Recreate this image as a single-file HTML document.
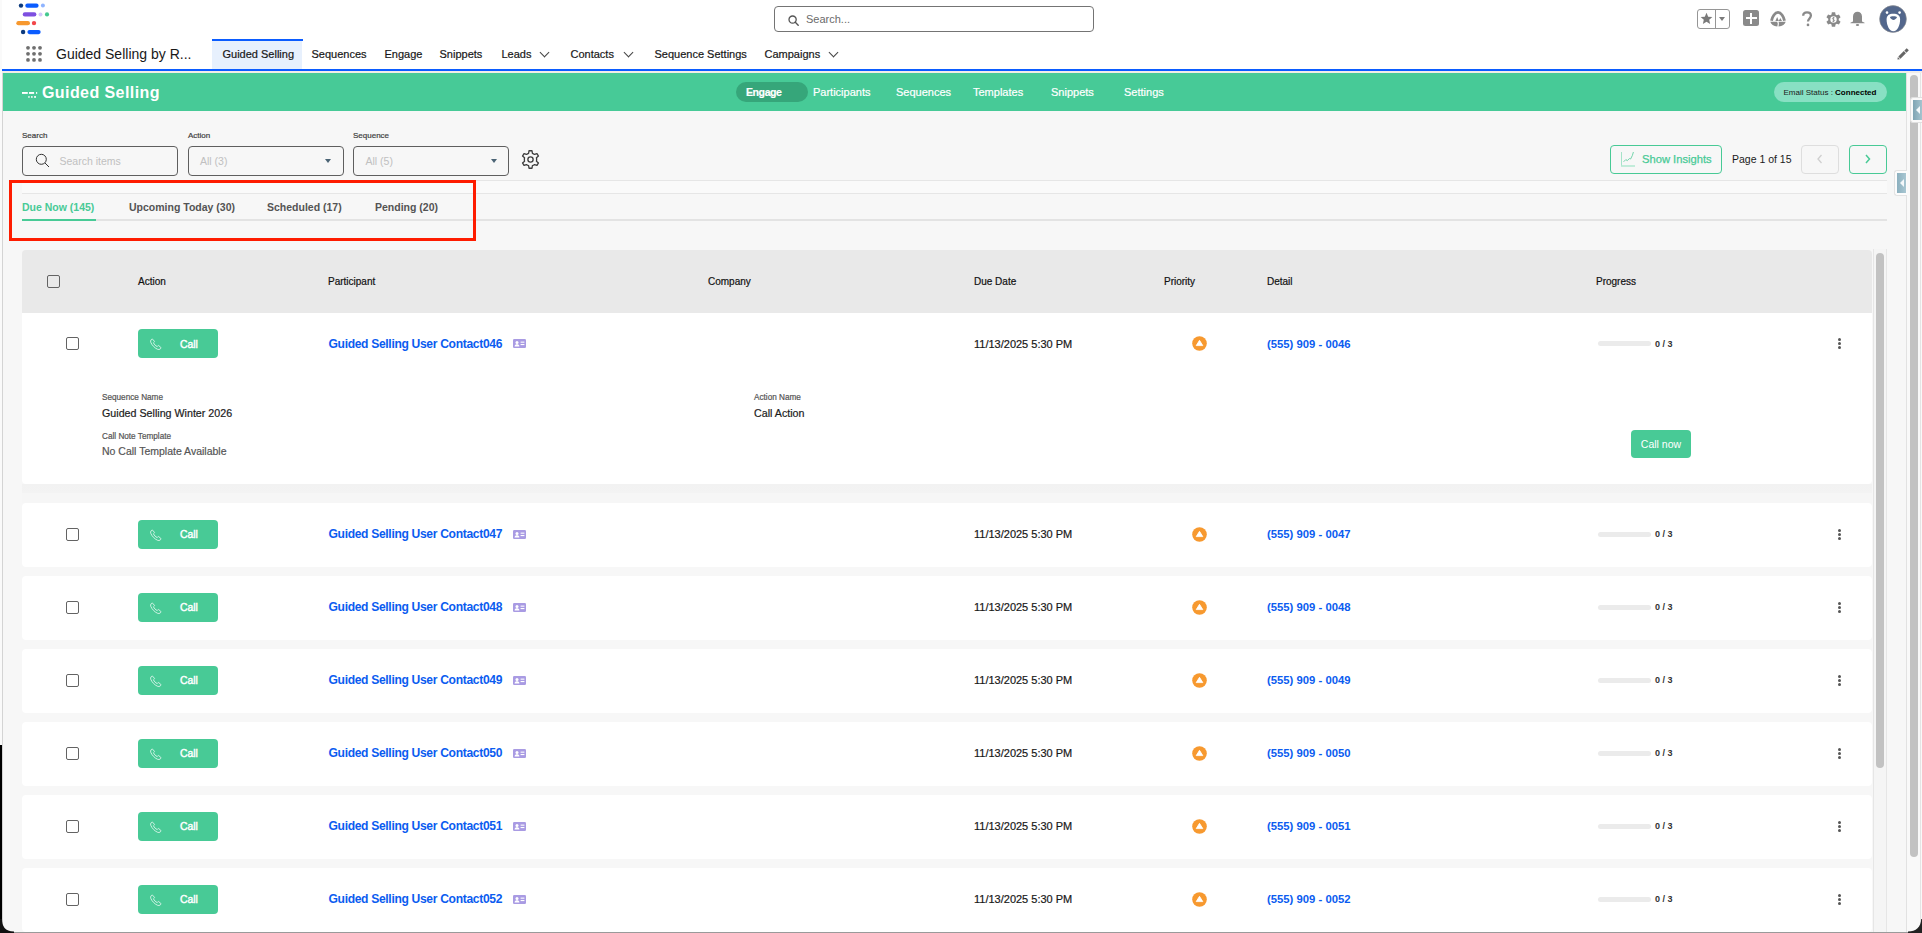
<!DOCTYPE html>
<html><head><meta charset="utf-8">
<style>
*{box-sizing:border-box;margin:0;padding:0}
html,body{width:1922px;height:933px;overflow:hidden;background:#fff;font-family:"Liberation Sans", sans-serif;position:relative}
.nav,.gtab,.th,.date,.val,.val2,.lbl,.flbl{-webkit-text-stroke:0.2px currentColor}
.a{position:absolute}
.t{position:absolute;white-space:nowrap;line-height:14px}
.nav{position:absolute;top:47px;font-size:11px;color:#181818;line-height:14px;white-space:nowrap}
.chev{position:absolute;top:49px;width:7px;height:7px;border-right:1.2px solid #444;border-bottom:1.2px solid #444;transform:rotate(45deg)}
.gtab{position:absolute;top:85px;font-size:11px;color:#fff;line-height:14px;white-space:nowrap}
.flbl{position:absolute;top:130.6px;font-size:8px;color:#3e3e3e;line-height:10px}
.inp{position:absolute;top:146px;height:30px;border:1px solid #5f5f5f;border-radius:4px;background:#f7f7f7}
.ph{position:absolute;top:8px;font-size:10.5px;color:#c0c0c0;line-height:13px;white-space:nowrap}
.tri{position:absolute;top:12px;width:0;height:0;border-left:3.5px solid transparent;border-right:3.5px solid transparent;border-top:4px solid #4b6475}
.tab{position:absolute;top:200px;font-size:10.5px;font-weight:bold;color:#545454;line-height:14px;white-space:nowrap}
.th{position:absolute;top:275px;font-size:10px;color:#111;line-height:14px;white-space:nowrap}
.cb{position:absolute;width:13px;height:13px;border:1.8px solid #636363;border-radius:2px;background:#fff}
.rowbox{position:absolute;left:22px;width:1850px;background:#fff;border-radius:4px}
.callbtn{position:absolute;width:80px;height:29px;background:#48ca96;border-radius:4px}
.calltxt{position:absolute;left:42px;top:8.5px;font-size:10.4px;font-weight:normal;-webkit-text-stroke:0.4px #fff;color:#fff;line-height:14px}
.link{font-size:12.1px;font-weight:bold;color:#0b5cf0;letter-spacing:-0.33px}
.date{font-size:11px;color:#181818}
.phone{font-size:11.3px;font-weight:bold;color:#0b5cf0}
.pbar{position:absolute;width:53px;height:5px;border-radius:3px;background:#ebebeb}
.prog{font-size:9px;font-weight:bold;color:#333;line-height:12px}
.kd{position:absolute;left:0;width:3.2px;height:3.2px;border-radius:50%;background:#555}
.lbl{font-size:8.2px;color:#555;line-height:10px}
.val{font-size:10.7px;color:#1c1c1c}
.val2{font-size:10.5px;color:#555}
.callnow{position:absolute;width:60px;height:28px;background:#48ca96;border-radius:4px;color:#fff;font-size:10.5px;line-height:28px;text-align:center}
</style></head><body>
<!-- window left border -->
<div class="a" style="left:0;top:0;width:2px;height:745px;background:#fafafa"></div>
<div class="a" style="left:0;top:745px;width:2px;height:188px;background:#000"></div>

<!-- logo -->
<svg class="a" style="left:14px;top:2px" width="40" height="36" viewBox="0 0 40 36">
<circle cx="7" cy="3.6" r="2.2" fill="#0c3a7d"/>
<rect x="11.3" y="1.5" width="13.3" height="4.3" rx="2.15" fill="#0b5cff"/>
<circle cx="28.9" cy="3.6" r="2" fill="#8fb4ff"/>
<rect x="8.7" y="10.3" width="13.7" height="4.3" rx="2.15" fill="#7e4fe0"/>
<circle cx="26.5" cy="12.4" r="2" fill="#d5c8fb"/>
<circle cx="33" cy="12.4" r="2.1" fill="#45c890"/>
<rect x="2.3" y="19" width="13.7" height="4.3" rx="2.15" fill="#f7982e"/>
<circle cx="20" cy="21.1" r="2.2" fill="#f2464a"/>
<circle cx="9.1" cy="30" r="2.2" fill="#0c3a7d"/>
<rect x="13.4" y="27.9" width="13.3" height="4.3" rx="2.15" fill="#0b5cff"/>
</svg>

<!-- top search -->
<div class="a" style="left:774px;top:6px;width:320px;height:26px;border:1px solid #747474;border-radius:4px;background:#fff"></div>
<svg class="a" style="left:788px;top:15px" width="11" height="11" viewBox="0 0 11 11"><circle cx="4.6" cy="4.6" r="3.6" fill="none" stroke="#555" stroke-width="1.3"/><path d="M7.3 7.3 L10.2 10.2" stroke="#555" stroke-width="1.4" stroke-linecap="round"/></svg>
<div class="t" style="left:806px;top:12px;font-size:11px;color:#6b6b6b">Search...</div>

<!-- header right icons -->
<div class="a" style="left:1697px;top:9px;width:33px;height:20px;border:1px solid #969696;border-radius:3px"></div>
<div class="a" style="left:1715px;top:9px;width:1px;height:20px;background:#969696"></div>
<svg class="a" style="left:1700px;top:12px" width="13" height="13" viewBox="0 0 24 24"><path d="M12 1.5 L15.1 8.6 L22.8 9.3 L17 14.4 L18.7 22 L12 18 L5.3 22 L7 14.4 L1.2 9.3 L8.9 8.6 Z" fill="#7a7a7a"/></svg>
<div class="a" style="left:1719px;top:17px;width:0;height:0;border-left:3.5px solid transparent;border-right:3.5px solid transparent;border-top:4px solid #7a7a7a"></div>
<div class="a" style="left:1743px;top:10px;width:16px;height:16px;background:#8a8a8a;border-radius:2.5px"></div>
<div class="a" style="left:1750.2px;top:12.5px;width:1.8px;height:11px;background:#fff"></div>
<div class="a" style="left:1745.6px;top:17.2px;width:11px;height:1.8px;background:#fff"></div>
<svg class="a" style="left:1770px;top:11px" width="16" height="16" viewBox="0 0 16 16"><path d="M1.5 9.8 C2.3 5.5 5 1.4 8 1.4 C11 1.4 13.7 5.5 14.5 9.8" fill="none" stroke="#8a8a8a" stroke-width="2.8"/><path d="M5.4 9.9 L7.2 5.9 L8.8 9.9 Z M8.7 9.9 L10.3 7.1 L12 9.9 Z" fill="#8a8a8a"/><path d="M0.3 10.8 L7.2 10.8 L7.8 12.8 L7.3 15.4 C3.5 15.2 1 13.6 0.3 10.8 Z M8.6 10.8 L15.7 10.8 C15 13.6 12.5 15.2 8.5 15.4 L8.9 12.8 Z" fill="#8a8a8a"/></svg>
<svg class="a" style="left:1801px;top:11px" width="12" height="16" viewBox="0 0 12 16"><path d="M2.2 4.8 C2.2 2.6 3.8 1.3 6 1.3 C8.4 1.3 9.9 2.7 9.9 4.6 C9.9 7.3 7 7.6 7 10.6" fill="none" stroke="#8a8a8a" stroke-width="2.3"/><circle cx="7" cy="13.9" r="1.35" fill="#8a8a8a"/></svg>
<svg class="a" style="left:1825.5px;top:11.5px" width="15" height="15" viewBox="0 0 15 15"><path d="M5.51 2.59 L5.84 0.29 L9.16 0.29 L9.49 2.59 L10.76 3.32 L12.91 2.45 L14.58 5.34 L12.75 6.76 L12.75 8.24 L14.58 9.66 L12.91 12.55 L10.76 11.68 L9.49 12.41 L9.16 14.71 L5.84 14.71 L5.51 12.41 L4.24 11.68 L2.09 12.55 L0.42 9.66 L2.25 8.24 L2.25 6.76 L0.42 5.34 L2.09 2.45 L4.24 3.32 Z" fill="#8a8a8a"/><circle cx="7.5" cy="7.5" r="3.2" fill="#fff"/><path d="M8.6 5.9 C8.2 5.4 6.4 5.4 6.4 6.6 C6.4 7.7 8.6 7.3 8.6 8.5 C8.6 9.6 6.8 9.6 6.3 9.1 M7.5 4.9 L7.5 10.1" fill="none" stroke="#8a8a8a" stroke-width="0.8"/></svg>
<svg class="a" style="left:1850px;top:11px" width="15" height="16" viewBox="0 0 15 16"><path d="M3 10.6 L3 5.6 C3 2.5 5 0.7 7.5 0.7 C10 0.7 12 2.5 12 5.6 L12 10.6 L14.6 11.8 L14.6 12.3 L0.4 12.3 L0.4 11.8 Z" fill="#8a8a8a"/><ellipse cx="7.5" cy="14" rx="1.7" ry="0.9" fill="#8a8a8a"/></svg>
<svg class="a" style="left:1879px;top:5px" width="28" height="28" viewBox="0 0 28 28"><circle cx="14" cy="14" r="13.4" fill="#53678c" stroke="#8e8e8e" stroke-width="0.6"/><circle cx="8" cy="7.6" r="1.3" fill="#fff"/><circle cx="20.6" cy="7.6" r="1.3" fill="#fff"/><path d="M14.3 8.8 C18.5 8.8 21.1 10.5 21.1 14.5 C21.1 20 18.5 26.2 14.3 26.2 C10.1 26.2 7.6 20 7.6 14.5 C7.6 10.5 10.1 8.8 14.3 8.8 Z" fill="#fff"/><path d="M11.1 12.2 C11.1 10.8 17.8 10.8 17.8 12.2 C17.8 13.6 15.5 14.9 14.45 14.9 C13.4 14.9 11.1 13.6 11.1 12.2 Z" fill="#53678c"/></svg>

<!-- nav row -->
<svg class="a" style="left:25px;top:45px" width="18" height="18" viewBox="0 0 18 18"><g fill="#6f6f6f"><circle cx="3" cy="2.8" r="1.9"/><circle cx="9" cy="2.8" r="1.9"/><circle cx="15" cy="2.8" r="1.9"/><circle cx="3" cy="8.8" r="1.9"/><circle cx="9" cy="8.8" r="1.9"/><circle cx="15" cy="8.8" r="1.9"/><circle cx="3" cy="14.9" r="1.9"/><circle cx="9" cy="14.9" r="1.9"/><circle cx="15" cy="14.9" r="1.9"/></g></svg>
<div class="t" style="left:56px;top:46.3px;font-size:14px;color:#181818;line-height:17px">Guided Selling by R...</div>
<div class="a" style="left:212px;top:41px;width:90px;height:28px;background:#e7f0fd"></div>
<div class="a" style="left:212px;top:39px;width:91px;height:2px;background:#0b5cff"></div>
<div class="nav" style="left:222.5px">Guided Selling</div>
<div class="nav" style="left:311.5px">Sequences</div>
<div class="nav" style="left:384.5px">Engage</div>
<div class="nav" style="left:439.5px">Snippets</div>
<div class="nav" style="left:501.5px">Leads</div>
<div class="chev" style="left:541px"></div>
<div class="nav" style="left:570.5px">Contacts</div>
<div class="chev" style="left:625px"></div>
<div class="nav" style="left:654.5px">Sequence Settings</div>
<div class="nav" style="left:764.5px">Campaigns</div>
<div class="chev" style="left:830px"></div>
<svg class="a" style="left:1896px;top:48px" width="13" height="13" viewBox="0 0 13 13"><g transform="translate(6.6,6.4) rotate(-45)" fill="#666"><path d="M-7.3 0 L-5.2 -1.5 L-5.2 1.5 Z"/><rect x="-4.5" y="-1.5" width="7.7" height="3"/><rect x="4" y="-1.5" width="3.3" height="3"/></g></svg>

<!-- blue line -->
<div class="a" style="left:2px;top:69px;width:1920px;height:2px;background:#0b5cff"></div>
<div class="a" style="left:2px;top:71px;width:1920px;height:2px;background:#f1ede8"></div>

<!-- content area -->
<div class="a" style="left:2px;top:73px;width:1905px;height:860px;background:#f7f7f7;border-left:1px solid #d4d4d4"></div>
<!-- green bar -->
<div class="a" style="left:3px;top:73px;width:1903px;height:38px;background:#47ca97"></div>
<svg class="a" style="left:22px;top:91.8px" width="16" height="7" viewBox="0 0 16 7"><g fill="#fff"><rect x="0" y="0" width="5.8" height="1.9"/><rect x="7" y="0" width="5.1" height="1.9"/><rect x="14" y="0.1" width="1.2" height="1.7"/><rect x="6.3" y="4.1" width="1.3" height="1.7"/><rect x="9.1" y="4.1" width="1.5" height="1.7"/><rect x="12.1" y="4.1" width="1.9" height="1.7"/></g></svg>
<div class="t" style="left:42px;top:82.6px;font-size:16px;font-weight:bold;color:#fff;line-height:19px;letter-spacing:0.42px">Guided Selling</div>
<div class="a" style="left:736px;top:82px;width:72px;height:20px;border-radius:10px;background:#36a67a"></div>
<div class="gtab" style="left:746px;font-weight:bold;font-size:10.5px;letter-spacing:-0.4px">Engage</div>
<div class="gtab" style="left:813px">Participants</div>
<div class="gtab" style="left:896px">Sequences</div>
<div class="gtab" style="left:973px">Templates</div>
<div class="gtab" style="left:1051px">Snippets</div>
<div class="gtab" style="left:1124px">Settings</div>
<div class="a" style="left:1774px;top:82px;width:113px;height:20px;border-radius:10px;background:#88e0c3"></div>
<div class="t" style="left:1783.5px;top:87px;font-size:8px;color:#1a1a1a;line-height:11px">Email Status : <b style="color:#000">Connected</b></div>

<!-- right scroll area -->
<div class="a" style="left:1906px;top:73px;width:16px;height:860px;background:#f9f9f9;border-left:1px solid #e2e2e2"></div>
<div class="a" style="left:1910px;top:75px;width:8px;height:782px;border-radius:4px;background:#c2c2c2"></div>


<!-- filters -->
<div class="flbl" style="left:22px">Search</div>
<div class="flbl" style="left:188px">Action</div>
<div class="flbl" style="left:353px">Sequence</div>
<div class="inp" style="left:22px;width:156px"><svg style="position:absolute;left:12px;top:6px" width="15" height="15" viewBox="0 0 15 15"><circle cx="6.3" cy="6.3" r="5" fill="none" stroke="#333" stroke-width="1"/><path d="M10 10 L14 14" stroke="#333" stroke-width="1"/></svg><span class="ph" style="left:36.5px">Search items</span></div>
<div class="inp" style="left:188px;width:156px"><span class="ph" style="left:11px">All (3)</span><div class="tri" style="left:136px"></div></div>
<div class="inp" style="left:353px;width:156px"><span class="ph" style="left:11.5px">All (5)</span><div class="tri" style="left:136.5px"></div></div>
<svg class="a" style="left:520px;top:149px" width="21" height="21" viewBox="0 0 24 24"><path d="M10.3 2 L13.7 2 L14.2 4.9 C15.1 5.2 15.9 5.7 16.6 6.2 L19.4 5.2 L21.1 8.1 L18.8 10 C19 10.7 19 11.3 19 12 C19 12.7 19 13.3 18.8 14 L21.1 15.9 L19.4 18.8 L16.6 17.8 C15.9 18.3 15.1 18.8 14.2 19.1 L13.7 22 L10.3 22 L9.8 19.1 C8.9 18.8 8.1 18.3 7.4 17.8 L4.6 18.8 L2.9 15.9 L5.2 14 C5 13.3 5 12.7 5 12 C5 11.3 5 10.7 5.2 10 L2.9 8.1 L4.6 5.2 L7.4 6.2 C8.1 5.7 8.9 5.2 9.8 4.9 Z" fill="none" stroke="#3d3d3d" stroke-width="1.5" stroke-linejoin="round"/><circle cx="12" cy="12" r="3" fill="none" stroke="#3d3d3d" stroke-width="1.5"/></svg>

<!-- right controls -->
<div class="a" style="left:1610px;top:145px;width:112px;height:29px;border:1px solid #48ca96;border-radius:4px"></div>
<svg class="a" style="left:1620px;top:151px" width="16" height="17" viewBox="0 0 16 17"><path d="M1.5 1 L1.5 15" stroke="#a6e3c9" stroke-width="1"/><path d="M1 15 L15 15" stroke="#b5e9d3" stroke-width="1.6"/><path d="M3.6 10.8 L5.8 8.6 L7.3 9.6 L9.4 7.6 L10.6 8 L12.4 4.4 L13.4 1" fill="none" stroke="#63cfa2" stroke-width="0.9"/></svg>
<div class="t" style="left:1642px;top:152px;font-size:11.2px;color:#48ca96;-webkit-text-stroke:0.25px #48ca96">Show Insights</div>
<div class="t" style="left:1732px;top:152px;font-size:10.5px;color:#1a1a1a">Page 1 of 15</div>
<div class="a" style="left:1801px;top:145px;width:38px;height:29px;border:1px solid #dedede;border-radius:4px"></div>
<svg class="a" style="left:1816px;top:154.2px" width="8" height="10" viewBox="0 0 8 10"><path d="M5.5 1 L2 5 L5.5 9" fill="none" stroke="#cfcfcf" stroke-width="1.3"/></svg>
<div class="a" style="left:1849px;top:145px;width:38px;height:29px;border:1px solid #48ca96;border-radius:4px"></div>
<svg class="a" style="left:1864px;top:154.2px" width="8" height="10" viewBox="0 0 8 10"><path d="M2 1 L5.5 5 L2 9" fill="none" stroke="#48ca96" stroke-width="1.5"/></svg>


<!-- tabs region lines -->
<div class="a" style="left:22px;top:179.5px;width:1865px;height:1px;background:#e6e6e6"></div>
<div class="a" style="left:22px;top:181px;width:1865px;height:12px;background:#fafafa"></div>
<div class="a" style="left:22px;top:193px;width:1865px;height:1px;background:#e6e6e6"></div>
<div class="a" style="left:22px;top:219px;width:1865px;height:2px;background:#e3e3e3"></div>
<div class="a" style="left:22px;top:219px;width:74px;height:2px;background:#48ca96"></div>
<div class="tab" style="left:22px;color:#48ca96">Due Now (145)</div>
<div class="tab" style="left:129px">Upcoming Today (30)</div>
<div class="tab" style="left:267px">Scheduled (17)</div>
<div class="tab" style="left:375px">Pending (20)</div>
<div class="a" style="left:9px;top:180px;width:467px;height:61px;border:3px solid #fe1c00"></div>

<!-- table header -->
<div class="a" style="left:22px;top:250px;width:1850px;height:62.5px;background:#e9e9e9;border-radius:4px 4px 0 0"></div>
<div class="cb" style="left:47px;top:275px;background:transparent"></div>
<div class="th" style="left:138px">Action</div>
<div class="th" style="left:328px">Participant</div>
<div class="th" style="left:708px">Company</div>
<div class="th" style="left:974px">Due Date</div>
<div class="th" style="left:1164px">Priority</div>
<div class="th" style="left:1267px">Detail</div>
<div class="th" style="left:1596px">Progress</div>
<!-- inner scrollbar -->
<div class="a" style="left:1872.5px;top:249px;width:14.5px;height:684px;background:#f5f5f5;border-left:1px solid #e6e6e6;border-right:1px solid #e6e6e6"></div>
<div class="a" style="left:1876px;top:253px;width:8px;height:515px;border-radius:4px;background:#c2c2c2"></div>

<div class="rowbox" style="top:313px;height:171px;border-radius:0 0 4px 4px"></div>
<div class="a" style="left:22px;top:484px;width:1850px;height:19px;background:linear-gradient(#f2f2f2,#f3f3f3 47%,#f6f6f6 50%,#f6f6f6)"></div>
<div class="cb" style="left:66px;top:337.0px"></div>
<div class="callbtn" style="left:138px;top:329.0px"><svg style="position:absolute;left:12px;top:9px" width="12" height="12" viewBox="0 0 12 12"><path d="M2.6 1.2 L4.3 3.2 C4.6 3.6 4.5 4 4.1 4.3 L3.5 4.8 C4.1 6.3 5.6 7.9 7.2 8.5 L7.7 7.9 C8 7.5 8.4 7.4 8.8 7.7 L10.8 9.4 C11.1 9.7 11.1 10.1 10.8 10.4 L10 11.1 C9.4 11.6 8.5 11.7 7.6 11.3 C4.7 10 2 7.3 0.8 4.4 C0.4 3.5 0.5 2.6 1 2 L1.7 1.2 C2 0.9 2.3 0.9 2.6 1.2 Z" fill="none" stroke="#fff" stroke-width="0.8" opacity="0.9"/></svg><span class="calltxt">Call</span></div>
<div class="t link" style="left:328.5px;top:336.8px">Guided Selling User Contact046</div>
<svg style="position:absolute;left:513px;top:339.0px" width="13" height="9" viewBox="0 0 13 9"><rect x="0" y="0" width="13" height="9" rx="1.2" fill="#a99be3"/><circle cx="4" cy="3.4" r="1.5" fill="#fff"/><path d="M1.6 7.4 C1.8 5.6 2.8 5.2 4 5.2 C5.2 5.2 6.2 5.6 6.4 7.4 Z" fill="#fff"/><rect x="7.6" y="2.6" width="3.8" height="1.1" fill="#fff"/><rect x="7.6" y="5" width="3.8" height="1.1" fill="#fff"/></svg>
<div class="t date" style="left:974px;top:336.5px">11/13/2025 5:30 PM</div>
<svg style="position:absolute;left:1192.0px;top:336.0px" width="15" height="15" viewBox="0 0 15 15"><circle cx="7.5" cy="7.5" r="7.3" fill="#f7992f"/><path d="M7.5 4.3 L10.8 9.6 L4.2 9.6 Z" fill="#fff" stroke="#fff" stroke-width="0.8" stroke-linejoin="round"/></svg>
<div class="t phone" style="left:1267px;top:336.5px">(555) 909 - 0046</div>
<div class="pbar" style="left:1598px;top:341.0px"></div>
<div class="t prog" style="left:1655px;top:337.5px">0 / 3</div>
<div style="position:absolute;left:1838px;top:338.0px;width:3px;height:11px">
<div class="kd" style="top:0"></div><div class="kd" style="top:4px"></div><div class="kd" style="top:8px"></div></div>
<div class="t lbl" style="left:102px;top:392.8px">Sequence Name</div>
<div class="t val" style="left:102px;top:406px">Guided Selling Winter 2026</div>
<div class="t lbl" style="left:102px;top:431.8px">Call Note Template</div>
<div class="t val2" style="left:102px;top:444px">No Call Template Available</div>
<div class="t lbl" style="left:754px;top:392.8px">Action Name</div>
<div class="t val" style="left:754px;top:406px">Call Action</div>
<div class="callnow" style="left:1631px;top:430px">Call now</div>
<div class="rowbox" style="top:503px;height:63.5px"></div>
<div class="cb" style="left:66px;top:527.5px"></div>
<div class="callbtn" style="left:138px;top:519.5px"><svg style="position:absolute;left:12px;top:9px" width="12" height="12" viewBox="0 0 12 12"><path d="M2.6 1.2 L4.3 3.2 C4.6 3.6 4.5 4 4.1 4.3 L3.5 4.8 C4.1 6.3 5.6 7.9 7.2 8.5 L7.7 7.9 C8 7.5 8.4 7.4 8.8 7.7 L10.8 9.4 C11.1 9.7 11.1 10.1 10.8 10.4 L10 11.1 C9.4 11.6 8.5 11.7 7.6 11.3 C4.7 10 2 7.3 0.8 4.4 C0.4 3.5 0.5 2.6 1 2 L1.7 1.2 C2 0.9 2.3 0.9 2.6 1.2 Z" fill="none" stroke="#fff" stroke-width="0.8" opacity="0.9"/></svg><span class="calltxt">Call</span></div>
<div class="t link" style="left:328.5px;top:527.3px">Guided Selling User Contact047</div>
<svg style="position:absolute;left:513px;top:529.5px" width="13" height="9" viewBox="0 0 13 9"><rect x="0" y="0" width="13" height="9" rx="1.2" fill="#a99be3"/><circle cx="4" cy="3.4" r="1.5" fill="#fff"/><path d="M1.6 7.4 C1.8 5.6 2.8 5.2 4 5.2 C5.2 5.2 6.2 5.6 6.4 7.4 Z" fill="#fff"/><rect x="7.6" y="2.6" width="3.8" height="1.1" fill="#fff"/><rect x="7.6" y="5" width="3.8" height="1.1" fill="#fff"/></svg>
<div class="t date" style="left:974px;top:527px">11/13/2025 5:30 PM</div>
<svg style="position:absolute;left:1192.0px;top:526.5px" width="15" height="15" viewBox="0 0 15 15"><circle cx="7.5" cy="7.5" r="7.3" fill="#f7992f"/><path d="M7.5 4.3 L10.8 9.6 L4.2 9.6 Z" fill="#fff" stroke="#fff" stroke-width="0.8" stroke-linejoin="round"/></svg>
<div class="t phone" style="left:1267px;top:527px">(555) 909 - 0047</div>
<div class="pbar" style="left:1598px;top:531.5px"></div>
<div class="t prog" style="left:1655px;top:528px">0 / 3</div>
<div style="position:absolute;left:1838px;top:528.5px;width:3px;height:11px">
<div class="kd" style="top:0"></div><div class="kd" style="top:4px"></div><div class="kd" style="top:8px"></div></div>
<div class="rowbox" style="top:576px;height:63.5px"></div>
<div class="cb" style="left:66px;top:600.5px"></div>
<div class="callbtn" style="left:138px;top:592.5px"><svg style="position:absolute;left:12px;top:9px" width="12" height="12" viewBox="0 0 12 12"><path d="M2.6 1.2 L4.3 3.2 C4.6 3.6 4.5 4 4.1 4.3 L3.5 4.8 C4.1 6.3 5.6 7.9 7.2 8.5 L7.7 7.9 C8 7.5 8.4 7.4 8.8 7.7 L10.8 9.4 C11.1 9.7 11.1 10.1 10.8 10.4 L10 11.1 C9.4 11.6 8.5 11.7 7.6 11.3 C4.7 10 2 7.3 0.8 4.4 C0.4 3.5 0.5 2.6 1 2 L1.7 1.2 C2 0.9 2.3 0.9 2.6 1.2 Z" fill="none" stroke="#fff" stroke-width="0.8" opacity="0.9"/></svg><span class="calltxt">Call</span></div>
<div class="t link" style="left:328.5px;top:600.3px">Guided Selling User Contact048</div>
<svg style="position:absolute;left:513px;top:602.5px" width="13" height="9" viewBox="0 0 13 9"><rect x="0" y="0" width="13" height="9" rx="1.2" fill="#a99be3"/><circle cx="4" cy="3.4" r="1.5" fill="#fff"/><path d="M1.6 7.4 C1.8 5.6 2.8 5.2 4 5.2 C5.2 5.2 6.2 5.6 6.4 7.4 Z" fill="#fff"/><rect x="7.6" y="2.6" width="3.8" height="1.1" fill="#fff"/><rect x="7.6" y="5" width="3.8" height="1.1" fill="#fff"/></svg>
<div class="t date" style="left:974px;top:600px">11/13/2025 5:30 PM</div>
<svg style="position:absolute;left:1192.0px;top:599.5px" width="15" height="15" viewBox="0 0 15 15"><circle cx="7.5" cy="7.5" r="7.3" fill="#f7992f"/><path d="M7.5 4.3 L10.8 9.6 L4.2 9.6 Z" fill="#fff" stroke="#fff" stroke-width="0.8" stroke-linejoin="round"/></svg>
<div class="t phone" style="left:1267px;top:600px">(555) 909 - 0048</div>
<div class="pbar" style="left:1598px;top:604.5px"></div>
<div class="t prog" style="left:1655px;top:601px">0 / 3</div>
<div style="position:absolute;left:1838px;top:601.5px;width:3px;height:11px">
<div class="kd" style="top:0"></div><div class="kd" style="top:4px"></div><div class="kd" style="top:8px"></div></div>
<div class="rowbox" style="top:649px;height:63.5px"></div>
<div class="cb" style="left:66px;top:673.5px"></div>
<div class="callbtn" style="left:138px;top:665.5px"><svg style="position:absolute;left:12px;top:9px" width="12" height="12" viewBox="0 0 12 12"><path d="M2.6 1.2 L4.3 3.2 C4.6 3.6 4.5 4 4.1 4.3 L3.5 4.8 C4.1 6.3 5.6 7.9 7.2 8.5 L7.7 7.9 C8 7.5 8.4 7.4 8.8 7.7 L10.8 9.4 C11.1 9.7 11.1 10.1 10.8 10.4 L10 11.1 C9.4 11.6 8.5 11.7 7.6 11.3 C4.7 10 2 7.3 0.8 4.4 C0.4 3.5 0.5 2.6 1 2 L1.7 1.2 C2 0.9 2.3 0.9 2.6 1.2 Z" fill="none" stroke="#fff" stroke-width="0.8" opacity="0.9"/></svg><span class="calltxt">Call</span></div>
<div class="t link" style="left:328.5px;top:673.3px">Guided Selling User Contact049</div>
<svg style="position:absolute;left:513px;top:675.5px" width="13" height="9" viewBox="0 0 13 9"><rect x="0" y="0" width="13" height="9" rx="1.2" fill="#a99be3"/><circle cx="4" cy="3.4" r="1.5" fill="#fff"/><path d="M1.6 7.4 C1.8 5.6 2.8 5.2 4 5.2 C5.2 5.2 6.2 5.6 6.4 7.4 Z" fill="#fff"/><rect x="7.6" y="2.6" width="3.8" height="1.1" fill="#fff"/><rect x="7.6" y="5" width="3.8" height="1.1" fill="#fff"/></svg>
<div class="t date" style="left:974px;top:673px">11/13/2025 5:30 PM</div>
<svg style="position:absolute;left:1192.0px;top:672.5px" width="15" height="15" viewBox="0 0 15 15"><circle cx="7.5" cy="7.5" r="7.3" fill="#f7992f"/><path d="M7.5 4.3 L10.8 9.6 L4.2 9.6 Z" fill="#fff" stroke="#fff" stroke-width="0.8" stroke-linejoin="round"/></svg>
<div class="t phone" style="left:1267px;top:673px">(555) 909 - 0049</div>
<div class="pbar" style="left:1598px;top:677.5px"></div>
<div class="t prog" style="left:1655px;top:674px">0 / 3</div>
<div style="position:absolute;left:1838px;top:674.5px;width:3px;height:11px">
<div class="kd" style="top:0"></div><div class="kd" style="top:4px"></div><div class="kd" style="top:8px"></div></div>
<div class="rowbox" style="top:722px;height:63.5px"></div>
<div class="cb" style="left:66px;top:746.5px"></div>
<div class="callbtn" style="left:138px;top:738.5px"><svg style="position:absolute;left:12px;top:9px" width="12" height="12" viewBox="0 0 12 12"><path d="M2.6 1.2 L4.3 3.2 C4.6 3.6 4.5 4 4.1 4.3 L3.5 4.8 C4.1 6.3 5.6 7.9 7.2 8.5 L7.7 7.9 C8 7.5 8.4 7.4 8.8 7.7 L10.8 9.4 C11.1 9.7 11.1 10.1 10.8 10.4 L10 11.1 C9.4 11.6 8.5 11.7 7.6 11.3 C4.7 10 2 7.3 0.8 4.4 C0.4 3.5 0.5 2.6 1 2 L1.7 1.2 C2 0.9 2.3 0.9 2.6 1.2 Z" fill="none" stroke="#fff" stroke-width="0.8" opacity="0.9"/></svg><span class="calltxt">Call</span></div>
<div class="t link" style="left:328.5px;top:746.3px">Guided Selling User Contact050</div>
<svg style="position:absolute;left:513px;top:748.5px" width="13" height="9" viewBox="0 0 13 9"><rect x="0" y="0" width="13" height="9" rx="1.2" fill="#a99be3"/><circle cx="4" cy="3.4" r="1.5" fill="#fff"/><path d="M1.6 7.4 C1.8 5.6 2.8 5.2 4 5.2 C5.2 5.2 6.2 5.6 6.4 7.4 Z" fill="#fff"/><rect x="7.6" y="2.6" width="3.8" height="1.1" fill="#fff"/><rect x="7.6" y="5" width="3.8" height="1.1" fill="#fff"/></svg>
<div class="t date" style="left:974px;top:746px">11/13/2025 5:30 PM</div>
<svg style="position:absolute;left:1192.0px;top:745.5px" width="15" height="15" viewBox="0 0 15 15"><circle cx="7.5" cy="7.5" r="7.3" fill="#f7992f"/><path d="M7.5 4.3 L10.8 9.6 L4.2 9.6 Z" fill="#fff" stroke="#fff" stroke-width="0.8" stroke-linejoin="round"/></svg>
<div class="t phone" style="left:1267px;top:746px">(555) 909 - 0050</div>
<div class="pbar" style="left:1598px;top:750.5px"></div>
<div class="t prog" style="left:1655px;top:747px">0 / 3</div>
<div style="position:absolute;left:1838px;top:747.5px;width:3px;height:11px">
<div class="kd" style="top:0"></div><div class="kd" style="top:4px"></div><div class="kd" style="top:8px"></div></div>
<div class="rowbox" style="top:795px;height:63.5px"></div>
<div class="cb" style="left:66px;top:819.5px"></div>
<div class="callbtn" style="left:138px;top:811.5px"><svg style="position:absolute;left:12px;top:9px" width="12" height="12" viewBox="0 0 12 12"><path d="M2.6 1.2 L4.3 3.2 C4.6 3.6 4.5 4 4.1 4.3 L3.5 4.8 C4.1 6.3 5.6 7.9 7.2 8.5 L7.7 7.9 C8 7.5 8.4 7.4 8.8 7.7 L10.8 9.4 C11.1 9.7 11.1 10.1 10.8 10.4 L10 11.1 C9.4 11.6 8.5 11.7 7.6 11.3 C4.7 10 2 7.3 0.8 4.4 C0.4 3.5 0.5 2.6 1 2 L1.7 1.2 C2 0.9 2.3 0.9 2.6 1.2 Z" fill="none" stroke="#fff" stroke-width="0.8" opacity="0.9"/></svg><span class="calltxt">Call</span></div>
<div class="t link" style="left:328.5px;top:819.3px">Guided Selling User Contact051</div>
<svg style="position:absolute;left:513px;top:821.5px" width="13" height="9" viewBox="0 0 13 9"><rect x="0" y="0" width="13" height="9" rx="1.2" fill="#a99be3"/><circle cx="4" cy="3.4" r="1.5" fill="#fff"/><path d="M1.6 7.4 C1.8 5.6 2.8 5.2 4 5.2 C5.2 5.2 6.2 5.6 6.4 7.4 Z" fill="#fff"/><rect x="7.6" y="2.6" width="3.8" height="1.1" fill="#fff"/><rect x="7.6" y="5" width="3.8" height="1.1" fill="#fff"/></svg>
<div class="t date" style="left:974px;top:819px">11/13/2025 5:30 PM</div>
<svg style="position:absolute;left:1192.0px;top:818.5px" width="15" height="15" viewBox="0 0 15 15"><circle cx="7.5" cy="7.5" r="7.3" fill="#f7992f"/><path d="M7.5 4.3 L10.8 9.6 L4.2 9.6 Z" fill="#fff" stroke="#fff" stroke-width="0.8" stroke-linejoin="round"/></svg>
<div class="t phone" style="left:1267px;top:819px">(555) 909 - 0051</div>
<div class="pbar" style="left:1598px;top:823.5px"></div>
<div class="t prog" style="left:1655px;top:820px">0 / 3</div>
<div style="position:absolute;left:1838px;top:820.5px;width:3px;height:11px">
<div class="kd" style="top:0"></div><div class="kd" style="top:4px"></div><div class="kd" style="top:8px"></div></div>
<div class="rowbox" style="top:868px;height:63.5px"></div>
<div class="cb" style="left:66px;top:892.5px"></div>
<div class="callbtn" style="left:138px;top:884.5px"><svg style="position:absolute;left:12px;top:9px" width="12" height="12" viewBox="0 0 12 12"><path d="M2.6 1.2 L4.3 3.2 C4.6 3.6 4.5 4 4.1 4.3 L3.5 4.8 C4.1 6.3 5.6 7.9 7.2 8.5 L7.7 7.9 C8 7.5 8.4 7.4 8.8 7.7 L10.8 9.4 C11.1 9.7 11.1 10.1 10.8 10.4 L10 11.1 C9.4 11.6 8.5 11.7 7.6 11.3 C4.7 10 2 7.3 0.8 4.4 C0.4 3.5 0.5 2.6 1 2 L1.7 1.2 C2 0.9 2.3 0.9 2.6 1.2 Z" fill="none" stroke="#fff" stroke-width="0.8" opacity="0.9"/></svg><span class="calltxt">Call</span></div>
<div class="t link" style="left:328.5px;top:892.3px">Guided Selling User Contact052</div>
<svg style="position:absolute;left:513px;top:894.5px" width="13" height="9" viewBox="0 0 13 9"><rect x="0" y="0" width="13" height="9" rx="1.2" fill="#a99be3"/><circle cx="4" cy="3.4" r="1.5" fill="#fff"/><path d="M1.6 7.4 C1.8 5.6 2.8 5.2 4 5.2 C5.2 5.2 6.2 5.6 6.4 7.4 Z" fill="#fff"/><rect x="7.6" y="2.6" width="3.8" height="1.1" fill="#fff"/><rect x="7.6" y="5" width="3.8" height="1.1" fill="#fff"/></svg>
<div class="t date" style="left:974px;top:892px">11/13/2025 5:30 PM</div>
<svg style="position:absolute;left:1192.0px;top:891.5px" width="15" height="15" viewBox="0 0 15 15"><circle cx="7.5" cy="7.5" r="7.3" fill="#f7992f"/><path d="M7.5 4.3 L10.8 9.6 L4.2 9.6 Z" fill="#fff" stroke="#fff" stroke-width="0.8" stroke-linejoin="round"/></svg>
<div class="t phone" style="left:1267px;top:892px">(555) 909 - 0052</div>
<div class="pbar" style="left:1598px;top:896.5px"></div>
<div class="t prog" style="left:1655px;top:893px">0 / 3</div>
<div style="position:absolute;left:1838px;top:893.5px;width:3px;height:11px">
<div class="kd" style="top:0"></div><div class="kd" style="top:4px"></div><div class="kd" style="top:8px"></div></div>
<div class="a" style="left:1920px;top:73px;width:1px;height:860px;background:#e4e4e4"></div>
<div class="a" style="left:1909.5px;top:97px;width:12.5px;height:26px;background:#fafafa;border-radius:3px 0 0 3px;border:1px solid #e0e0e0;border-right:none"></div>
<div class="a" style="left:1913px;top:100.3px;width:9px;height:20px;background:linear-gradient(90deg,#7fa4b3,#a6c4cf)"></div>
<div class="a" style="left:1915.5px;top:106.3px;width:0;height:0;border-top:4px solid transparent;border-bottom:4px solid transparent;border-right:4.5px solid #f4f8fa"></div>
<div class="a" style="left:1893.7px;top:170px;width:13px;height:25.5px;background:#fcfcfc;border-radius:3px 0 0 3px;border:1px solid #e3e3e3;border-right:none"></div>
<div class="a" style="left:1897px;top:173px;width:9px;height:20px;background:linear-gradient(90deg,#8cb0bf,#a9c7d2)"></div>
<div class="a" style="left:1899.5px;top:179px;width:0;height:0;border-top:4px solid transparent;border-bottom:4px solid transparent;border-right:4.5px solid #f4f8fa"></div>
<div class="a" style="left:0;top:931.5px;width:1922px;height:1.5px;background:#9a9a9a"></div>
<svg class="a" style="left:0;top:919px" width="14" height="14" viewBox="0 0 14 14"><path d="M0 0 L2 0 C2 7 5 12.5 14 12.5 L14 14 L0 14 Z" fill="#111"/></svg>
<svg class="a" style="left:1908px;top:919px" width="14" height="14" viewBox="0 0 14 14"><path d="M14 0 L14 14 L0 14 L0 12.5 C8 12.5 13 8 13.2 0 Z" fill="#222"/></svg>

</body></html>
